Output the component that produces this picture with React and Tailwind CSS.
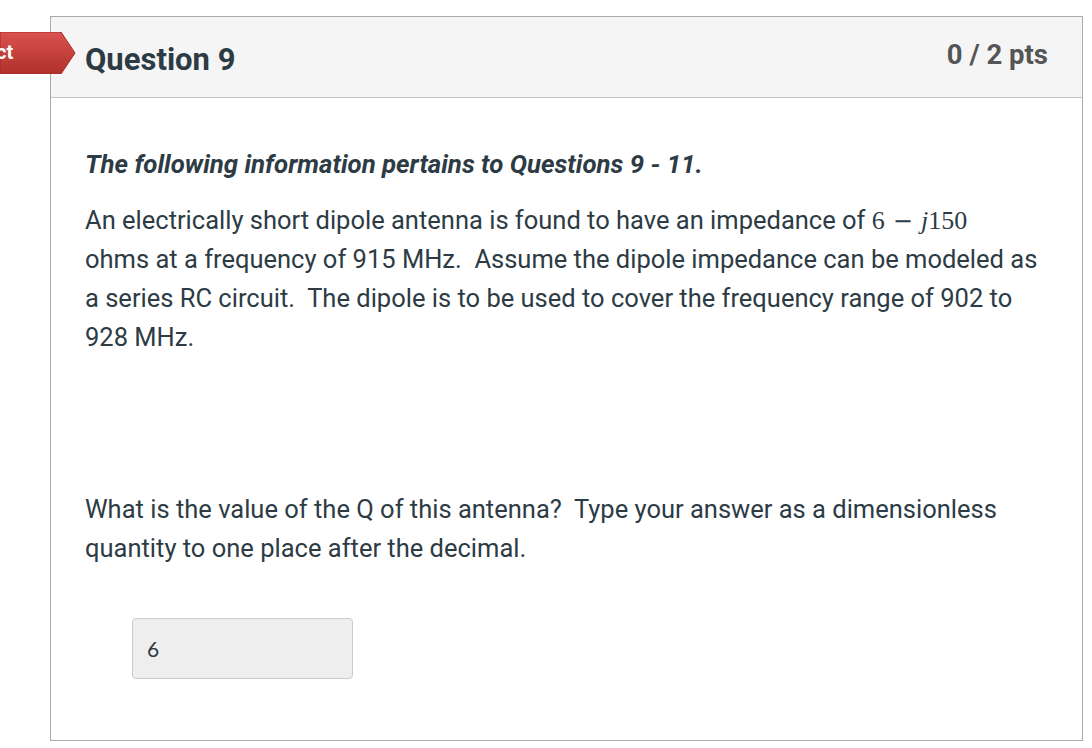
export default function App() {
  return (
    <div className="relative w-[1092px] h-[748px] bg-white overflow-hidden" style={{ fontFamily: "Roboto, 'Noto Sans', sans-serif" }}>
      <div className="absolute left-0 top-[32px] h-[42px] w-[76px] z-10 overflow-hidden">
        <svg width="76" height="42" viewBox="0 0 76 42" className="absolute inset-0">
          <defs>
            <linearGradient id="rg" x1="0" y1="0" x2="0" y2="1">
              <stop offset="0" stopColor="#d9534f" />
              <stop offset="1" stopColor="#b0302c" />
            </linearGradient>
          </defs>
          <path d="M0 0 H61 L75 21 L61 42 H0 Z" fill="url(#rg)" stroke="#a52a25" strokeWidth="1" />
        </svg>
        <span className="absolute left-[-4px] top-[10px] text-white font-bold text-[20px] leading-none">ct</span>
      </div>
      <div className="absolute left-[50px] top-[16px] w-[1033px] h-[725px] border border-[#aaaaaa] flex flex-col">
        <div className="h-[81px] bg-[#f5f5f5] border-b border-[#c4c4c4] flex items-center justify-between pl-[34px] pr-[34px]">
          <div className="text-[31px] font-bold text-[#2d3b45] pt-[6px]">Question 9</div>
          <div className="text-[27.5px] font-bold text-[#555555] pb-[4px]">0 / 2 pts</div>
        </div>
        <div className="pl-[34px] pr-[30px] text-[#2d3b45] text-[25.5px] leading-[39px]">
          <p className="mt-[47px] font-bold italic text-[25.8px]">The following information pertains to Questions 9 - 11.</p>
          <p className="mt-[17px]">
            An electrically short dipole antenna is found to have an impedance of{" "}
            <span className="text-[26px] leading-none" style={{ fontFamily: "'Liberation Serif', 'DejaVu Serif', serif" }}>
              6<span className="inline-block mx-[8px] text-[24px]" style={{ fontFamily: "'DejaVu Serif', serif" }}>−</span><i>j</i>150
            </span>
            <br />
            ohms at a frequency of 915 MHz.&nbsp; Assume the dipole impedance can be modeled as a series RC circuit.&nbsp; The dipole is to be used to cover the frequency range of 902 to 928 MHz.
          </p>
          <p className="mt-[133px]">
            What is the value of the Q of this antenna?&nbsp; Type your answer as a dimensionless quantity to one place after the decimal.
          </p>
          <div className="mt-[50px] ml-[47px] w-[221px] h-[61px] bg-[#eeeeee] border border-[#cccccc] rounded-[4px] flex items-center pl-[14px] text-[21px] text-[#2d3b45]" style={{ fontFamily: "Lato, sans-serif" }}>
            6
          </div>
        </div>
      </div>
    </div>
  );
}
